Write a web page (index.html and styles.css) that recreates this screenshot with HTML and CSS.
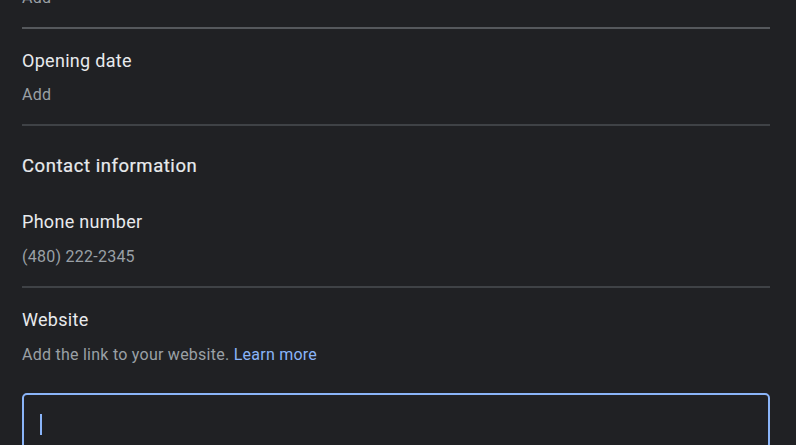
FILE: index.html
```html
<!DOCTYPE html>
<html lang="en">
<head>
<meta charset="utf-8">
<title>Business info</title>
<link rel="stylesheet" href="styles.css">
</head>
<body>
<main class="panel">
  <section class="field field-first">
    <div class="value">Add</div>
  </section>
  <hr class="divider divider-light">
  <section class="field">
    <div class="label">Opening date</div>
    <div class="value">Add</div>
  </section>
  <hr class="divider">
  <h2 class="group-title">Contact information</h2>
  <section class="field field-phone">
    <div class="label">Phone number</div>
    <div class="value">(480) 222-2345</div>
  </section>
  <hr class="divider">
  <section class="field field-web">
    <div class="label">Website</div>
    <div class="value value-desc">Add the link to your website. <a class="link" href="#">Learn more</a></div>
  </section>
  <div class="input-box">
    <span class="caret"></span>
  </div>
</main>
</body>
</html>
```

FILE: styles.css
```css
html, body {
  margin: 0;
  padding: 0;
  background: #202124;
  height: 100%;
  overflow: hidden;
}

body {
  font-family: Roboto, "Liberation Sans", sans-serif;
  color: #e8eaed;
}

.panel {
  display: flex;
  flex-direction: column;
  padding: 0 26px 0 22px;
  margin-top: -14px;
}

.field {
  display: flex;
  flex-direction: column;
  gap: 10.5px;
  padding: 19.5px 0 17px;
}

.field-first {
  padding-top: 0;
}

.field-phone {
  padding-top: 32px;
}

.field-web {
  padding-top: 20.5px;
}

.label {
  font-size: 18px;
  line-height: 24px;
  letter-spacing: 0.3px;
  color: #e8eaed;
}

.value {
  font-size: 16px;
  line-height: 24px;
  letter-spacing: 0.25px;
  color: #9aa0a6;
}

.value-desc {
  margin-top: 0;
}

.link {
  color: #8ab4f8;
  text-decoration: none;
}

.divider {
  margin: 0;
  border: 0;
  height: 2px;
  background: #3f4246;
}

.divider-light {
  background: #55585c;
}

.group-title {
  margin: 28px 0 0;
  font-size: 18.5px;
  line-height: 24px;
  font-weight: 400;
  letter-spacing: 0.55px;
  color: #e8eaed;
  -webkit-text-stroke: 0.2px #e8eaed;
}

.input-box {
  margin-top: 9.5px;
  height: 56px;
  box-sizing: border-box;
  border: 2px solid #8ab4f8;
  border-radius: 5px;
  display: flex;
  align-items: center;
  padding-left: 16px;
}

.caret {
  display: block;
  width: 2px;
  height: 21px;
  margin-top: 7px;
  background: #8ab4f8;
}
```
